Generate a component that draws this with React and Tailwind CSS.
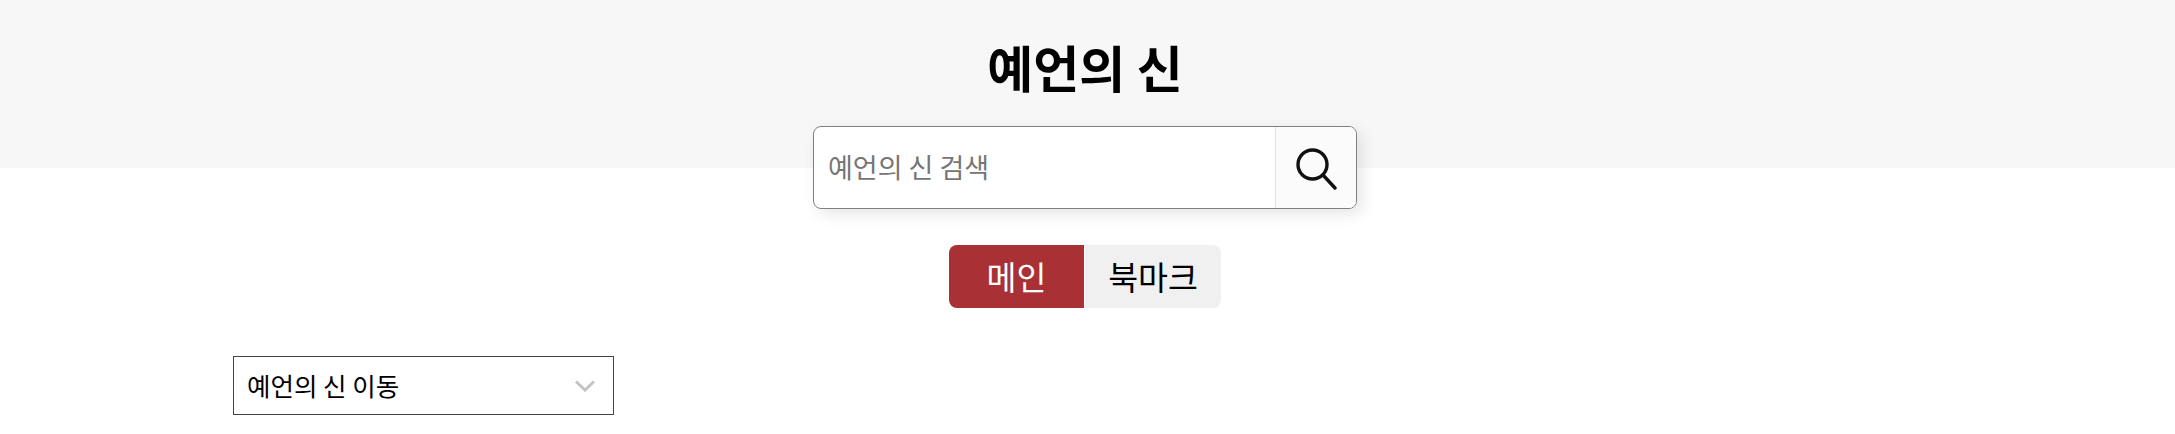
const fontStack = { fontFamily: '"Noto Sans CJK KR", sans-serif' };

function SearchIcon() {
  return (
    <svg width="44" height="44" viewBox="0 0 44 44" fill="none" stroke="#111" strokeWidth="3.4" strokeLinecap="round">
      <circle cx="18.5" cy="18.5" r="14.5" />
      <path d="M29 29 L41 42" />
    </svg>
  );
}

function App() {
  return (
    <div className="w-full bg-white text-black" style={fontStack}>
      <header className="h-[168px] bg-[#f7f7f7] pr-[5px] pt-[29px] text-center">
        <h1 className="text-[50px] font-bold leading-[74px]">예언의 신</h1>
      </header>

      <div className="pr-[5px]">
        <div className="mx-auto -mt-[42px] flex h-[83px] w-[544px] overflow-hidden rounded-lg border border-[#808080] bg-white shadow-[5px_5px_15px_rgba(0,0,0,0.1)]">
          <input
            className="min-w-0 flex-1 px-[14px] text-[27px] outline-none placeholder:text-[#757575]"
            placeholder="예언의 신 검색"
          />
          <button className="flex w-[81px] items-center justify-center border-l border-[#e5e5e5] bg-[#fbfbfb]">
            <SearchIcon />
          </button>
        </div>

        <nav className="mt-[36px] flex justify-center">
          <div className="flex h-[63px] w-[272px] overflow-hidden rounded-lg text-[32.5px]">
            <button className="w-[135px] bg-[#a93135] text-white">메인</button>
            <button className="flex-1 border-l border-white bg-[#f0f0f0]">북마크</button>
          </div>
        </nav>
      </div>

      <div className="ml-[233px] mt-[48px] flex h-[59px] w-[381px] items-center justify-between border border-[#444] pl-[13px] pr-[18px] text-[25.5px]">
        <span>예언의 신 이동</span>
        <svg width="20" height="12" viewBox="0 0 20 12" fill="none" stroke="#c4c4c4" strokeWidth="3">
          <path d="M1 1.5 L10 10 L19 1.5" />
        </svg>
      </div>
    </div>
  );
}

export default App;
